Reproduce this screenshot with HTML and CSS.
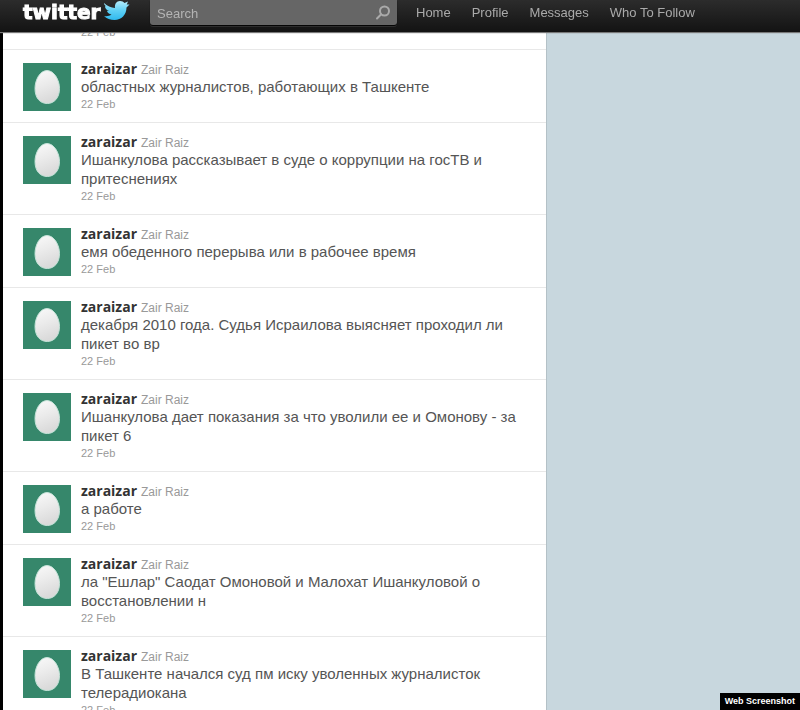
FILE: index.html
```html
<!DOCTYPE html>
<html lang="ru">
<head>
<meta charset="utf-8">
<title>zaraizar</title>
<link rel="stylesheet" href="styles.css">
</head>
<body>
<svg class="defs" aria-hidden="true">
  <defs>
    <linearGradient id="shell" x1="0" y1="0" x2="0.3" y2="1">
      <stop offset="0" stop-color="#fafafa"/><stop offset="0.5" stop-color="#ebebeb"/><stop offset="1" stop-color="#dadada"/>
    </linearGradient>
    <linearGradient id="sky" x1="0" y1="0" x2="0" y2="1">
      <stop offset="0" stop-color="#b5ecfb"/><stop offset="0.5" stop-color="#5fd0f5"/><stop offset="1" stop-color="#2fb9ee"/>
    </linearGradient>
    <symbol id="egg" viewBox="0 0 48 48">
      <rect width="48" height="48" fill="#36876b"/>
      <path d="M24 7.500C31 7.500 36.500 17 36.500 25.500C36.500 35 31 40.500 24.300 40.500C17 40.500 12 35 12 25.500C12 17 17 7.500 24 7.500Z" fill="url(#shell)" stroke="#c4e3d8" stroke-width="1"/>
    </symbol>
  </defs>
</svg>
<header class="topbar">
  <a class="logo" href="#"><span>twitter</span><svg class="bird" viewBox="0 0 27 21" aria-hidden="true"><path d="M1 3C4 6 8 7.500 12 8C11.500 4 13.500 1 17 1C19 1 20.500 1.700 21.500 3L25 1.500L23.700 4.500L26.500 4.500L23.500 7.500C23.500 14.500 18.500 20 11.500 20C7.500 20 3.500 18.500 1 16C4 16.500 6.500 16 8.500 14.500C6 14 4.500 12.800 4 11L6 11C3.500 10 2 8.500 2 6L3.500 6.500C2 5.500 1 4.500 1 3Z" fill="url(#sky)"/></svg></a>
  <form class="search">
    <input type="search" placeholder="Search" aria-label="Search">
    <button type="button" aria-label="Search"><svg viewBox="0 0 16 16" aria-hidden="true"><circle cx="9.500" cy="6" r="4.500"/><path d="M6.200 9.300L2 13.500"/></svg></button>
  </form>
  <nav class="nav"><a href="#">Home</a><a href="#">Profile</a><a href="#">Messages</a><a href="#">Who To Follow</a></nav>
</header>
<main class="feed">
  <article class="tweet partial"><div class="body"><time>22 Feb</time></div></article>
  <article class="tweet"><svg class="avatar"><use href="#egg"/></svg><div class="body"><div class="who"><a href="#">zaraizar</a> <span>Zair Raiz</span></div><p>областных журналистов, работающих в Ташкенте</p><time>22 Feb</time></div></article>
  <article class="tweet"><svg class="avatar"><use href="#egg"/></svg><div class="body"><div class="who"><a href="#">zaraizar</a> <span>Zair Raiz</span></div><p>Ишанкулова рассказывает в суде о коррупции на госТВ и<br>притеснениях</p><time>22 Feb</time></div></article>
  <article class="tweet"><svg class="avatar"><use href="#egg"/></svg><div class="body"><div class="who"><a href="#">zaraizar</a> <span>Zair Raiz</span></div><p>емя обеденного перерыва или в рабочее время</p><time>22 Feb</time></div></article>
  <article class="tweet"><svg class="avatar"><use href="#egg"/></svg><div class="body"><div class="who"><a href="#">zaraizar</a> <span>Zair Raiz</span></div><p>декабря 2010 года. Судья Исраилова выясняет проходил ли<br>пикет во вр</p><time>22 Feb</time></div></article>
  <article class="tweet"><svg class="avatar"><use href="#egg"/></svg><div class="body"><div class="who"><a href="#">zaraizar</a> <span>Zair Raiz</span></div><p>Ишанкулова дает показания за что уволили ее и Омонову - за<br>пикет 6</p><time>22 Feb</time></div></article>
  <article class="tweet"><svg class="avatar"><use href="#egg"/></svg><div class="body"><div class="who"><a href="#">zaraizar</a> <span>Zair Raiz</span></div><p>а работе</p><time>22 Feb</time></div></article>
  <article class="tweet"><svg class="avatar"><use href="#egg"/></svg><div class="body"><div class="who"><a href="#">zaraizar</a> <span>Zair Raiz</span></div><p>ла "Ешлар" Саодат Омоновой и Малохат Ишанкуловой о<br>восстановлении н</p><time>22 Feb</time></div></article>
  <article class="tweet"><svg class="avatar"><use href="#egg"/></svg><div class="body"><div class="who"><a href="#">zaraizar</a> <span>Zair Raiz</span></div><p>В Ташкенте начался суд пм иску уволенных журналисток<br>телерадиокана</p><time>22 Feb</time></div></article>
</main>
<div class="credit">Web Screenshot</div>
</body>
</html>
```
FILE: styles.css
```css
* { box-sizing: border-box; }
body {
  margin: 0;
  height: 100vh;
  overflow: hidden;
  background: #c8d7de;
  border-left: 3px solid #000;
  font-family: "Liberation Sans", Arial, sans-serif;
  color: #555;
}
a { color: inherit; text-decoration: none; }
.defs { position: absolute; width: 0; height: 0; }
.topbar {
  position: fixed;
  top: 0;
  left: 0;
  right: 0;
  z-index: 1;
  height: 32px;
  display: flex;
  align-items: flex-start;
  padding-left: 23px;
  background: linear-gradient(#2c2c2c, #131313);
  box-shadow: 0 1px 1px #777;
}
.logo {
  display: flex;
  gap: 3px;
  width: 127px;
  color: #fff;
  font: bold 20px/24px "DejaVu Sans", sans-serif;
  -webkit-text-stroke: 1px #fff;
}
.bird { width: 27px; height: 21px; flex: none; }
.search {
  display: flex;
  align-items: center;
  width: 247px;
  height: 25px;
  background: #666;
  border-radius: 0 0 3px 3px;
  box-shadow: 0 1px 1px #000, 0 2px 0 #333;
}
.search input {
  flex: 1;
  min-width: 0;
  height: 25px;
  padding: 2px 7px 0;
  border: 0;
  background: none;
  color: #ccc;
  font: 13px "Liberation Sans", Arial, sans-serif;
}
.search input::placeholder { color: #b4b4b4; opacity: 1; }
.search button { display: flex; padding: 0 6px; border: 0; background: none; }
.search svg { width: 16px; height: 16px; fill: none; stroke: #aaa; stroke-width: 2; stroke-linecap: round; }
.nav {
  display: flex;
  gap: 21px;
  margin-left: 19px;
  color: #aaa;
  font-size: 13px;
  line-height: 26px;
}
.feed {
  width: 68.3%;
  min-height: 100vh;
  padding-top: 24px;
  background: #fff;
  border-right: 1px solid #b4c1c7;
}
.tweet {
  display: flex;
  gap: 10px;
  padding: 10px 20px 9px;
  border-top: 1px solid #e8e8e8;
}
.partial { padding: 0 20px 8px 78px; border: 0; }
.avatar { width: 48px; height: 48px; margin-top: 3px; flex: none; }
.body { white-space: nowrap; }
.who {
  display: flex;
  align-items: baseline;
  gap: 4px;
  height: 17px;
  font-size: 12px;
  line-height: 17px;
  color: #999;
}
.who a { font: bold 14px/17px "Open Sans", sans-serif; color: #333; }
p { margin: 0; font-size: 15px; line-height: 19px; }
time { display: block; font-size: 11px; line-height: 17px; color: #999; }
.credit {
  position: fixed;
  right: 0;
  bottom: 0;
  padding: 0 5px;
  background: #000;
  color: #fff;
  font-size: 9px;
  font-weight: bold;
  line-height: 17px;
}
```
